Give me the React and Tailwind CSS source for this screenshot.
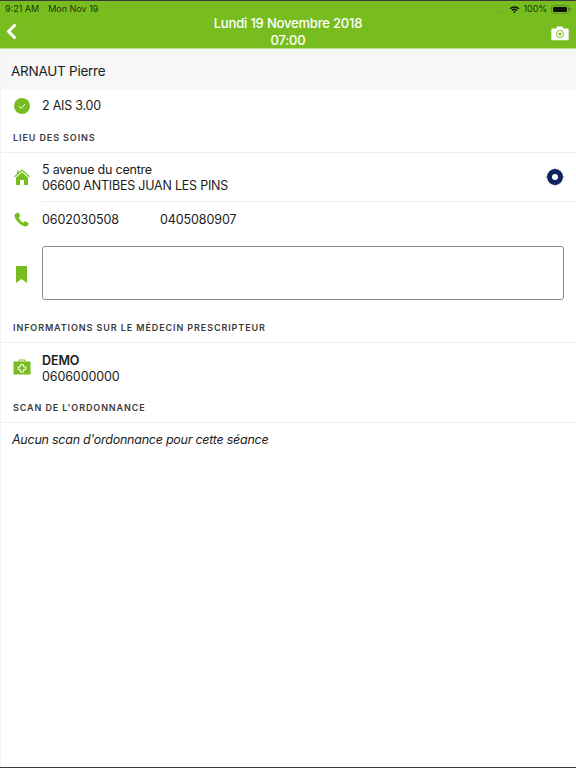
function Section({ className = "h-[33px]", children }) {
  return (
    <div className={`${className} shrink-0 flex items-end pl-[12px] pb-[8px] border-b border-[#eeeeee] text-[9px] leading-[12px] font-semibold tracking-[0.9px] text-[#3a3a3a]`}>
      {children}
    </div>
  );
}

export default function App() {
  return (
    <div className="w-[576px] h-[768px] flex flex-col bg-white border-t border-b border-[#3b3b3b] overflow-hidden text-[12.5px] tracking-[-0.22px] text-[#1c1c1c] font-['Inter','Liberation_Sans',sans-serif]">
      <header className="relative h-[48px] shrink-0 bg-[#78bd1f] border-b border-[#b9dc8c] tracking-normal">
        <div className="h-[16px] flex items-center justify-between px-[5px] text-[9px] text-[#1f3303]">
          <div className="flex gap-[9px]">
            <span>9:21 AM</span>
            <span>Mon Nov 19</span>
          </div>
          <div className="flex items-center gap-[4px]">
            <span className="tracking-[0.5px] text-[#5d8f1c] text-[8px] leading-none">....</span>
            <svg width="11" height="9" viewBox="0 0 12 9" className="ml-[1px]">
              <path d="M0.6 3 A8 8 0 0 1 11.4 3 L10.3 4.2 A6.4 6.4 0 0 0 1.7 4.2 Z" fill="#10190a" />
              <path d="M2.6 5 A5.2 5.2 0 0 1 9.4 5 L8.3 6.2 A3.6 3.6 0 0 0 3.7 6.2 Z" fill="#10190a" />
              <path d="M4.5 7 A2.4 2.4 0 0 1 7.5 7 L6 8.6 Z" fill="#10190a" />
            </svg>
            <span className="tracking-[-0.1px]">100%</span>
            <svg width="20" height="9" viewBox="0 0 20 9">
              <rect x="0.5" y="0.5" width="17" height="8" rx="2" fill="none" stroke="#5d8f1c" />
              <rect x="2" y="2" width="14" height="5" rx="1" fill="#0c1206" />
              <rect x="18.5" y="3" width="1" height="3" fill="#3f6012" />
            </svg>
          </div>
        </div>
        <div className="flex flex-col items-center text-white text-[13px] font-medium tracking-[-0.18px] leading-[17px] mt-[-2px]">
          <span>Lundi 19 Novembre 2018</span>
          <span>07:00</span>
        </div>
        <svg className="absolute left-[6px] top-[22px]" width="11" height="17" viewBox="0 0 11 17" fill="none">
          <path d="M9.4 1.5 L2.6 8.5 L9.4 15.5" stroke="white" strokeWidth="3" />
        </svg>
        <svg className="absolute left-[551px] top-[25px]" width="18" height="15" viewBox="0 0 18 15">
          <path d="M1.5 2.5 H5 L6.2 0.5 H11.5 L12.8 2.5 H16.5 A1.2 1.2 0 0 1 17.7 3.7 V13 A1.2 1.2 0 0 1 16.5 14.2 H1.5 A1.2 1.2 0 0 1 0.3 13 V3.7 A1.2 1.2 0 0 1 1.5 2.5 Z" fill="white" />
          <circle cx="9" cy="8" r="3.6" fill="none" stroke="#78bd1f" strokeWidth="0.9" />
          <circle cx="9" cy="8" r="1.6" fill="#78bd1f" />
        </svg>
      </header>

      <main className="flex-1 flex flex-col border-l border-[#f3f3f3]">
        <div className="h-[41px] shrink-0 flex items-center pl-[10px] pt-[3px] bg-[#f7f7f7] text-[13.5px] tracking-[-0.25px]">ARNAUT Pierre</div>

        <div className="h-[30px] shrink-0 flex items-center pt-[1px]">
          <div className="w-[41px] flex justify-center">
            <svg width="16" height="16" viewBox="0 0 16 16">
              <circle cx="8" cy="8" r="8" fill="#78bd1f" />
              <path d="M5 8.2 L7.2 10.3 L11 6" fill="none" stroke="white" strokeWidth="1" />
            </svg>
          </div>
          <span className="relative top-[1px]">2 AIS 3.00</span>
        </div>

        <Section>LIEU DES SOINS</Section>

        <div className="flex items-center h-[49px] shrink-0 relative">
          <div className="w-[41px] flex justify-center pb-[1px]">
            <svg width="16" height="16" viewBox="0 0 16 16">
              <path d="M8 0.3 L16 7.6 L15.2 8.3 L8 1.9 L0.8 8.3 L0 7.6 L3 4.8 V1.5 H4.5 V3.4 Z" fill="#78bd1f" />
              <path d="M8 3.2 L14 8.4 V16 H10 V11 H6 V16 H2 V8.4 Z" fill="#78bd1f" />
            </svg>
          </div>
          <div className="flex-1 leading-[16px] border-b border-[#eeeeee] h-full pt-[1px] flex flex-col justify-center">
            <span>5 avenue du centre</span>
            <span>06600 ANTIBES JUAN LES PINS</span>
          </div>
          <svg className="absolute left-[544px] top-[14px]" width="20" height="20" viewBox="0 0 20 20">
            <path d="M10 0.5 V4 M10 16 V19.5 M0.5 10 H4 M16 10 H19.5" stroke="#8b94b0" strokeWidth="1" />
            <circle cx="10" cy="10" r="5.5" fill="none" stroke="#0e2360" strokeWidth="5" />
          </svg>
        </div>

        <div className="flex items-center h-[34px] shrink-0">
          <div className="w-[41px] flex justify-center">
            <svg width="15" height="15" viewBox="0 0 15 15">
              <path d="M3.8 0.6 L1.2 2 C0.3 2.6 0.4 4 1 5.6 C2.2 8.8 5.6 12.4 9.4 14 C11 14.7 12.4 14.7 13.4 13.8 L14.7 12 C14.9 11.6 14.8 11.2 14.4 11 L11.6 9.3 C11.2 9.1 10.8 9.1 10.5 9.5 L9.4 10.8 C7.6 10 5.4 7.6 4.7 5.7 L5.9 4.7 C6.2 4.4 6.3 4 6.1 3.6 L4.7 0.9 C4.5 0.5 4.1 0.4 3.8 0.6 Z" fill="#78bd1f" />
            </svg>
          </div>
          <span className="w-[118px] tracking-[-0.1px] pt-[2px]">0602030508</span>
          <span className="tracking-[-0.1px] pt-[2px]">0405080907</span>
        </div>

        <div className="flex items-center h-[54px] mt-[10px] shrink-0">
          <div className="w-[41px] flex justify-center pt-[2px]">
            <svg width="11" height="17" viewBox="0 0 11 17">
              <path d="M0 0 H11 V17 L5.5 13 L0 17 Z" fill="#78bd1f" />
            </svg>
          </div>
          <div className="w-[522px] h-[54px] rounded-[3px] border border-[#8a8a8a]"></div>
        </div>

        <Section className="h-[33px] mt-[10px]">INFORMATIONS SUR LE MÉDECIN PRESCRIPTEUR</Section>

        <div className="flex items-center h-[48px] shrink-0">
          <div className="w-[41px] flex justify-center">
            <svg width="18" height="16" viewBox="0 0 18 16">
              <path d="M6 2.5 V1 H12 V2.5" fill="none" stroke="#78bd1f" strokeWidth="1" />
              <rect x="0.5" y="2.5" width="17" height="13" fill="#78bd1f" />
              <path d="M7.5 5.5 H10.5 V7.8 H12.8 V10.8 H10.5 V13 H7.5 V10.8 H5.2 V7.8 H7.5 Z" fill="none" stroke="white" strokeWidth="1" />
            </svg>
          </div>
          <div className="leading-[16px] tracking-[-0.1px] pt-[3px]">
            <div className="font-semibold">DEMO</div>
            <div>0606000000</div>
          </div>
        </div>

        <Section className="h-[32px]">SCAN DE L'ORDONNANCE</Section>

        <div className="h-[34px] shrink-0 flex items-center pl-[11px] pt-[1px] italic tracking-[-0.25px]">Aucun scan d'ordonnance pour cette séance</div>
      </main>
    </div>
  );
}
